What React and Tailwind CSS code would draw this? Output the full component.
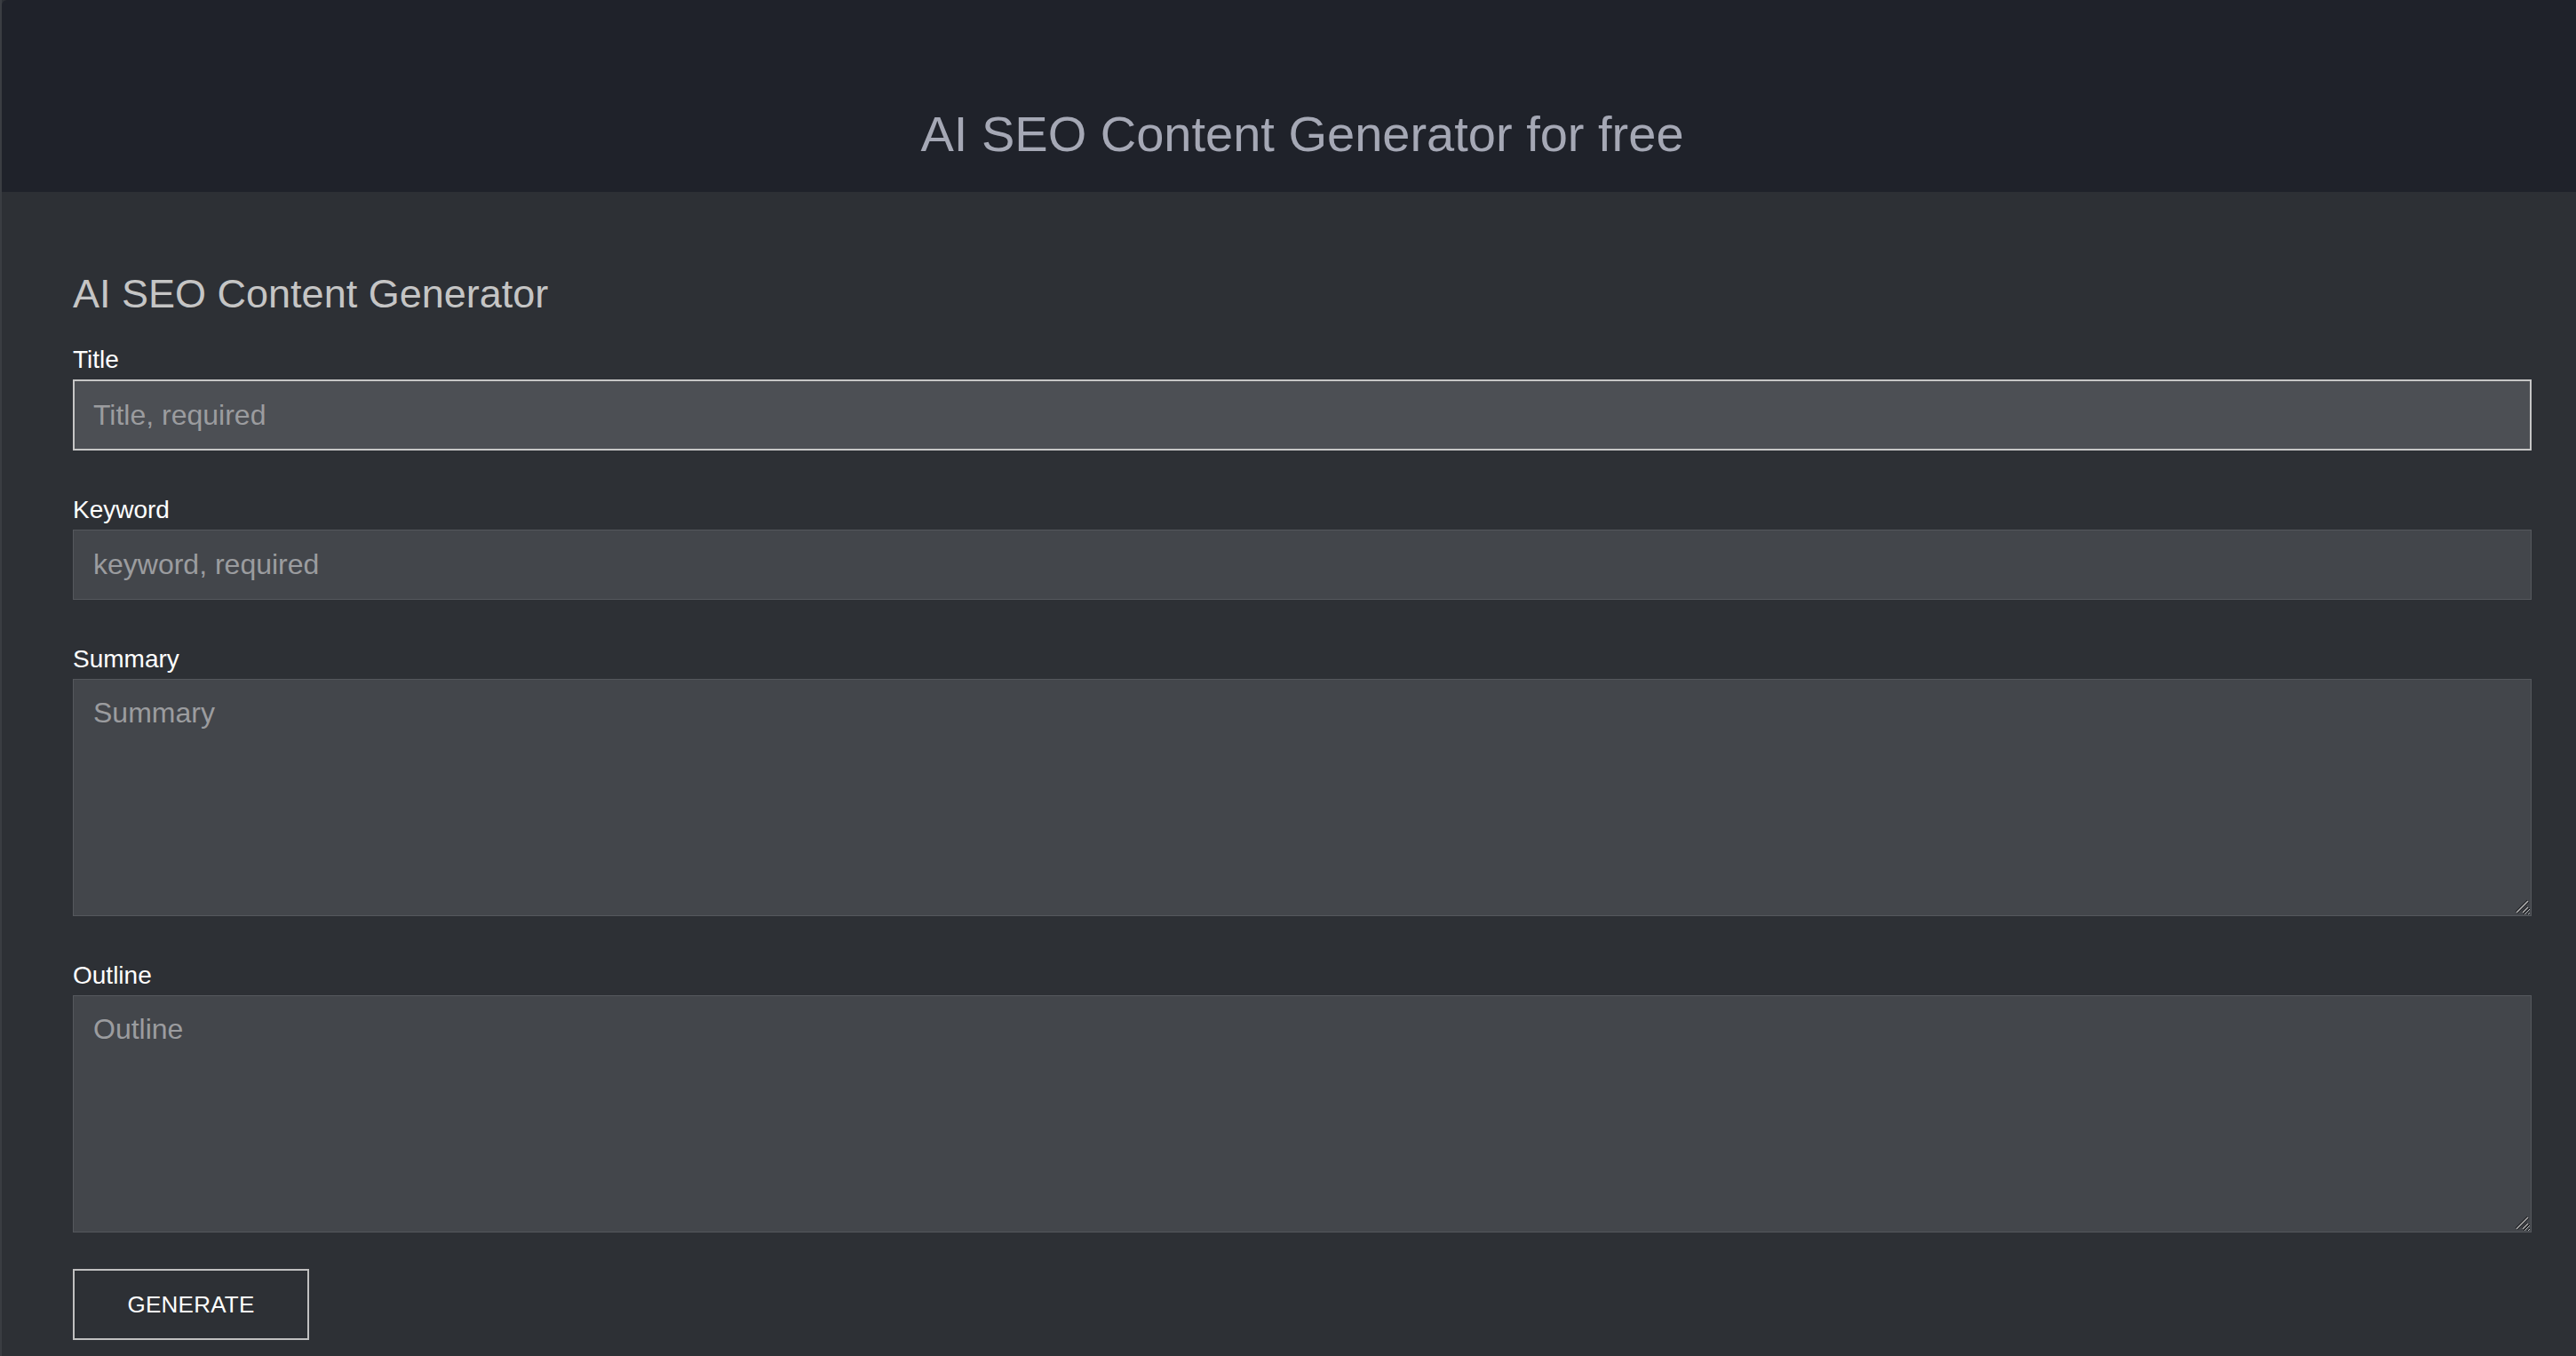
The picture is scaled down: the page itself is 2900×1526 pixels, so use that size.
import React, { useState } from 'react'

const fieldBase =
  'block w-full bg-[#43464b] border border-[#55585d] text-[32px] text-[#e5e5e5] placeholder:text-[#9b9c9f] px-[22px] outline-none focus:border-2 focus:border-[#c6c6c6] focus:bg-[#4c4f54] focus:px-[21px] [color-scheme:dark]'

function Field({ label, children }) {
  return (
    <div className="flex flex-col gap-[5px]">
      <label className="text-[28px] leading-[34px] text-white">{label}</label>
      {children}
    </div>
  )
}

// textarea with the resize grip drawn on top of the corner
function Area({ value, onChange, placeholder }) {
  return (
    <div className="relative">
      <textarea
        value={value}
        onChange={onChange}
        placeholder={placeholder}
        className={`${fieldBase} h-[267px] pt-[19px] pb-[22px] leading-[37px]`}
      />
      <svg
        className="absolute right-[3px] bottom-[3px] pointer-events-none"
        width="16"
        height="16"
        viewBox="0 0 16 16"
      >
        <path d="M2 15 L15 2" stroke="#1c1d20" strokeWidth="3.5" />
        <path d="M2 15 L15 2" stroke="#b4b4b4" strokeWidth="1.5" />
        <path d="M9 15 L15 9" stroke="#1c1d20" strokeWidth="3.5" />
        <path d="M9 15 L15 9" stroke="#b4b4b4" strokeWidth="1.5" />
      </svg>
    </div>
  )
}

export default function App() {
  const [form, setForm] = useState({ title: '', keyword: '', summary: '', outline: '' })
  const update = (key) => (e) => setForm({ ...form, [key]: e.target.value })

  return (
    <div className="min-h-screen bg-[#2d3035] border-l-2 border-[#3a3d42] font-['Liberation_Sans',Arial,sans-serif]">
      {/* Top banner */}
      <header className="h-[216px] bg-[#1f222a] rounded-tl-[6px] pt-[122px] pl-[30px] text-center">
        <h1 className="text-[56px] leading-[57px] text-[#a5a8b5]">AI SEO Content Generator for free</h1>
      </header>

      <main className="pl-[80px] pr-[50px] pt-[88px] pb-[20px]">
        <h2 className="text-[45px] leading-[54px] text-[#c5c5c5]">AI SEO Content Generator</h2>

        <form className="mt-[30px] flex flex-col gap-[50px]" onSubmit={(e) => e.preventDefault()}>
          <Field label="Title">
            <input
              autoFocus
              type="text"
              value={form.title}
              onChange={update('title')}
              placeholder="Title, required"
              className={`${fieldBase} h-[80px]`}
            />
          </Field>
          <Field label="Keyword">
            <input
              type="text"
              value={form.keyword}
              onChange={update('keyword')}
              placeholder="keyword, required"
              className={`${fieldBase} h-[79px]`}
            />
          </Field>
          <Field label="Summary">
            <Area value={form.summary} onChange={update('summary')} placeholder="Summary" />
          </Field>
          <Field label="Outline">
            <Area value={form.outline} onChange={update('outline')} placeholder="Outline" />
          </Field>
        </form>

        <button
          type="button"
          className="mt-[41px] w-[266px] h-[80px] border-2 border-[#c0c0c0] text-white text-[26px] tracking-[0.01em] uppercase"
        >
          Generate
        </button>
      </main>
    </div>
  )
}
